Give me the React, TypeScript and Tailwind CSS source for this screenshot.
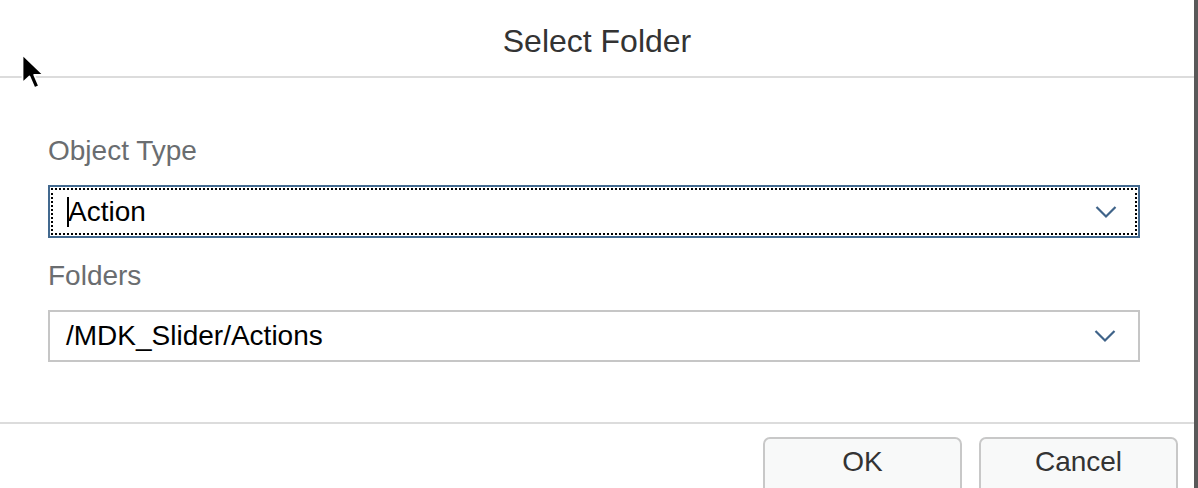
import React from "react";

function Chevron() {
    return (
        <svg width="22" height="14" viewBox="0 0 22 14" fill="none">
            <path d="M1.5 2 L11 11.5 L20.5 2" stroke="#3f6389" strokeWidth="2.2" />
        </svg>
    );
}

function Cursor() {
    return (
        <svg width="26" height="40" viewBox="0 0 26 40" className="absolute left-[20px] top-[52px]">
            <path
                d="M2.5 2.5 L2.5 31 L9.5 24.5 L14.5 36 L19 34 L14.2 22.8 L23.5 22.8 Z"
                fill="#000"
                stroke="#fff"
                strokeWidth="1.8"
                strokeLinejoin="round"
            />
        </svg>
    );
}

export default function App() {
    return (
        <div
            className="relative flex w-[1198px] h-[488px] overflow-hidden bg-white"
            style={{ fontFamily: '"Liberation Sans", Arial, sans-serif' }}
        >
            <div className="flex flex-col w-[1194px] h-full">
                {/* Header */}
                <div className="h-[78px] flex items-center justify-center border-b-2 border-[#dcdcdc] shrink-0">
                    <h1 className="text-[32px] text-[#333] pt-[6px]">Select Folder</h1>
                </div>

                {/* Body */}
                <div className="h-[346px] border-b-2 border-[#dcdcdc] px-[48px] pt-[58px] shrink-0">
                    <label className="block text-[28px] leading-[30px] text-[#6a6d70]">Object Type</label>
                    <div className="mt-[19px] w-[1092px] h-[53px] border-2 border-[#43698f] p-[1px]">
                        <div className="flex items-center justify-between h-full border-2 border-dotted border-black pl-[14px] pr-[18px]">
                            <span className="flex items-center text-[28px] text-black">
                                <span className="inline-block w-[2px] h-[30px] bg-black mr-[-1px]"></span>
                                Action
                            </span>
                            <Chevron />
                        </div>
                    </div>

                    <label className="block mt-[23px] text-[28px] leading-[30px] text-[#6a6d70]">Folders</label>
                    <div className="mt-[19px] w-[1092px] h-[52px] border-2 border-[#c6c6c6] flex items-center justify-between pl-[16px] pr-[22px]">
                        <span className="text-[28px] text-black">/MDK_Slider/Actions</span>
                        <Chevron />
                    </div>
                </div>

                {/* Footer */}
                <div className="flex justify-end gap-[17px] pr-[16px] pt-[13px]">
                    <button className="w-[199px] h-[60px] rounded-[7px] border-2 border-[#c8c8c8] bg-[#f8f9f9] text-[28px] text-[#333] pb-[10px]">
                        OK
                    </button>
                    <button className="w-[199px] h-[60px] rounded-[7px] border-2 border-[#c8c8c8] bg-[#f8f9f9] text-[28px] text-[#333] pb-[10px]">
                        Cancel
                    </button>
                </div>
            </div>

            {/* Right scrollbar edge */}
            <div className="w-[4px] h-full bg-[#595959]"></div>

            <Cursor />
        </div>
    );
}
